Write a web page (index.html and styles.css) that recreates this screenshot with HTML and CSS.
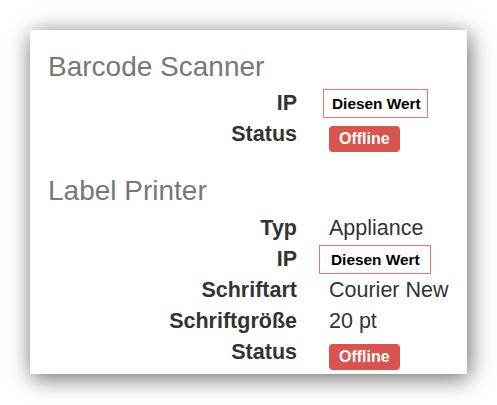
FILE: index.html
```html
<!DOCTYPE html>
<html lang="de">
<head>
<meta charset="utf-8">
<title>Geräte</title>
<link rel="stylesheet" href="styles.css">
</head>
<body>
<div class="card">
  <h3 class="title">Barcode Scanner</h3>
  <div class="props">
    <div class="label">IP</div>
    <div class="value"><span class="box">Diesen Wert</span></div>
    <div class="label">Status</div>
    <div class="value"><span class="badge">Offline</span></div>
  </div>
  <h3 class="title title-next">Label Printer</h3>
  <div class="props">
    <div class="label">Typ</div>
    <div class="value">Appliance</div>
    <div class="label">IP</div>
    <div class="value"><span class="box box-wide">Diesen Wert</span></div>
    <div class="label">Schriftart</div>
    <div class="value">Courier New</div>
    <div class="label">Schriftgröße</div>
    <div class="value">20 pt</div>
    <div class="label">Status</div>
    <div class="value"><span class="badge">Offline</span></div>
  </div>
</div>
</body>
</html>
```

FILE: styles.css
```css
html, body {
  margin: 0;
  padding: 0;
  background: #ffffff;
}
body {
  padding: 30px;
  font-family: "Liberation Sans", Arial, sans-serif;
  color: #333333;
}
.card {
  width: 437px;
  height: 344px;
  box-sizing: border-box;
  background: #ffffff;
  padding: 21px 18px 6px 18px;
  box-shadow: 2px 4px 22px rgba(0, 0, 0, 0.6);
}
.title {
  margin: 0 0 6px 0;
  font-size: 28px;
  font-weight: normal;
  line-height: 31px;
  color: #777777;
}
.title-next {
  margin-top: 25px;
  margin-bottom: 7px;
}
.props {
  display: grid;
  grid-template-columns: 249px auto;
  column-gap: 32px;
  grid-auto-rows: 31px;
  align-items: center;
  font-size: 21.5px;
  line-height: 31px;
}
.label {
  text-align: right;
  font-weight: bold;
}
.value {
  justify-self: start;
  display: flex;
  align-items: center;
}
.box {
  display: inline-block;
  margin-left: -6px;
  padding: 0 6px 0 8px;
  border: 1px solid #e8737c;
  font-size: 15.4px;
  font-weight: bold;
  line-height: 27px;
  color: #000000;
}
.box-wide {
  margin-left: -10px;
  padding: 0 10px 0 11px;
}
.badge {
  display: inline-block;
  margin-top: 9px;
  padding: 0 10px;
  background: #d9534f;
  border-radius: 4px;
  color: #ffffff;
  font-size: 16px;
  font-weight: bold;
  line-height: 26px;
}
```
